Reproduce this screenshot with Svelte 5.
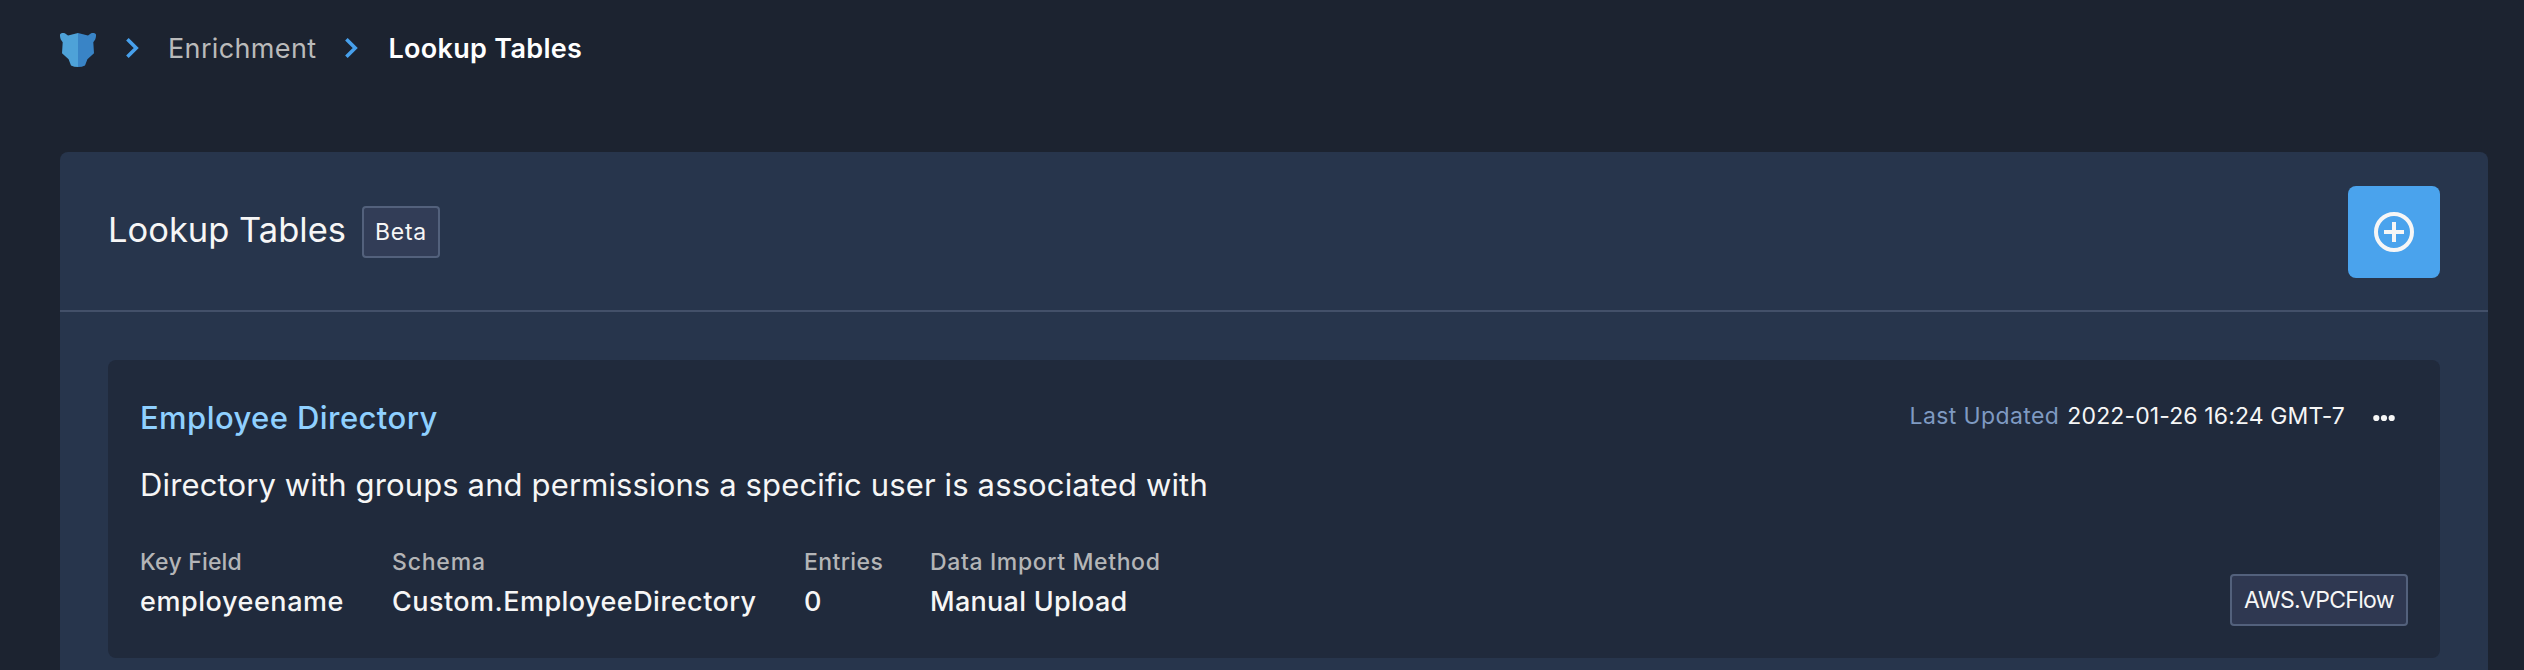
<script>
  const table = {
    name: 'Employee Directory',
    description: 'Directory with groups and permissions a specific user is associated with',
    updated: '2022-01-26 16:24 GMT-7',
    logType: 'AWS.VPCFlow'
  };
</script>

{#snippet chevron()}
  <svg class="chevron" width="14" height="20" viewBox="0 0 14 20" aria-hidden="true">
    <path d="M1.400 1.300 10.200 10 1.400 18.700" />
  </svg>
{/snippet}

<main>
  <nav>
    <svg class="logo" width="36" height="34" viewBox="0 0 36 34" aria-hidden="true">
      <path fill="#4ea2d8" d="M18 0 8 2.500 5.200 .4C3.800-.4 1-.3.1 1.200-.2 2.800.1 5 .8 6.600L2.700 9.200 2 20.300 8.600 26.300 11 32.400Q14 33.900 18 33.900Z" />
      <path fill="#3984c6" d="M18 0 28 2.500 30.800 .4C32.200-.4 35-.3 35.900 1.200 36.200 2.800 35.900 5 35.200 6.600L33.300 9.200 34 20.300 27.400 26.300 25 32.400Q22 33.900 18 33.900Z" />
    </svg>
    {@render chevron()}
    <span class="crumb">Enrichment</span>
    {@render chevron()}
    <span class="crumb current">Lookup Tables</span>
  </nav>

  <section class="panel">
    <header>
      <h1>Lookup Tables</h1>
      <span class="badge beta">Beta</span>
      <button class="add" aria-label="Add">
        <svg width="40" height="40" viewBox="0 0 40 40">
          <circle cx="20" cy="20" r="18" />
          <path d="M20 10v20M10 20h20" />
        </svg>
      </button>
    </header>

    <div class="body">
      <article>
        <div class="top">
          <h2>{table.name}</h2>
          <div class="updated"><span class="when">Last Updated</span><span class="date">{table.updated}</span></div>
          <button class="menu" aria-label="Options">
            <svg width="24" height="8" viewBox="0 0 24 8">
              <circle cx="4.300" cy="4" r="3.100" /><circle cx="12" cy="4" r="3.100" /><circle cx="19.700" cy="4" r="3.100" />
            </svg>
          </button>
        </div>
        <p>{table.description}</p>
        <div class="details">
          <dl class="key"><dt>Key Field</dt><dd>employeename</dd></dl>
          <dl class="schema"><dt>Schema</dt><dd>Custom.EmployeeDirectory</dd></dl>
          <dl class="entries"><dt>Entries</dt><dd>0</dd></dl>
          <dl class="method"><dt>Data Import Method</dt><dd>Manual Upload</dd></dl>
          <span class="badge type">{table.logType}</span>
        </div>
      </article>
    </div>
  </section>
</main>

<style>
  :global(body) { background: #1c2330; overflow: hidden; }
  main {
    box-sizing: border-box;
    height: 670px;
    overflow: hidden;
    padding: 28px 36px 0 60px;
    display: flex;
    flex-direction: column;
    background: #1c2330;
    color: #f6f6f6;
    font-family: Inter, sans-serif;
    white-space: nowrap;
  }
  nav { display: flex; align-items: center; height: 40px; margin-bottom: 84px; }
  .logo { margin: 4px 30px 0 0; }
  .chevron { fill: none; stroke: #47a0ec; stroke-width: 3.6; }
  .crumb { margin: 1px 29px 0 28px; font-size: 27px; line-height: 40px; letter-spacing: .36px; color: #bababa; }
  .current { margin-left: 29px; font-weight: 600; letter-spacing: .3px; color: #fff; }
  .panel { flex: 1 0 506px; display: flex; flex-direction: column; background: #27354c; border-radius: 8px 8px 0 0; }
  header {
    display: flex;
    align-items: center;
    padding: 34px 48px 32px;
    border-bottom: 2px solid #435069;
  }
  h1, h2, p, dl, dt, dd { margin: 0; font-weight: 400; }
  h1 { font-size: 34.5px; line-height: 44px; padding-bottom: 5px; width: 254px; }
  .badge {
    box-sizing: border-box;
    display: flex;
    align-items: center;
    justify-content: center;
    height: 52px;
    border: 2px solid #53617c;
    border-radius: 4px;
    background: #323d57;
    font-size: 23px;
  }
  .beta { width: 78px; letter-spacing: .77px; }
  .type { width: 178px; margin-left: auto; letter-spacing: -.67px; background: #2f3851; }
  button { border: 0; padding: 0; display: flex; align-items: center; justify-content: center; }
  .add { width: 92px; height: 92px; margin-left: auto; border-radius: 8px; background: #4aa3ed; }
  .add svg { fill: none; stroke: #f6f6f6; stroke-width: 4; }
  .body { padding: 48px; }
  article { padding: 32px; border-radius: 8px; background: #202a3c; }
  .top { display: flex; align-items: center; height: 50px; }
  h2 { font-size: 31px; font-weight: 500; letter-spacing: .42px; color: #8fd0ff; }
  .updated { display: flex; margin-left: auto; padding-bottom: 3px; font-size: 23px; line-height: 30px; }
  .when { letter-spacing: .4px; color: #7f9ac2; margin-right: 8px; }
  .date { letter-spacing: .12px; }
  .menu { width: 48px; height: 32px; margin-left: 15px; background: none; padding-top: 2px; }
  .menu svg { fill: #f6f6f6; }
  p { margin-top: 23px; font-size: 31px; line-height: 40px; letter-spacing: .13px; }
  .details { display: flex; align-items: flex-end; gap: 48px; height: 80px; margin-top: 41px; }
  dl { height: 80px; }
  dt { font-size: 23px; font-weight: 500; line-height: 32px; color: #b4b5b7; }
  dd { margin-top: 4px; font-size: 27px; font-weight: 500; line-height: 40px; }
  .key { width: 204px; }
  .key dt { letter-spacing: .2px; }
  .key dd { letter-spacing: .56px; }
  .schema { width: 364px; }
  .schema dt { letter-spacing: .8px; }
  .schema dd { letter-spacing: .46px; }
  .entries { width: 78px; }
  .entries dt { letter-spacing: .4px; }
  .method dt { letter-spacing: .63px; }
  .method dd { letter-spacing: .28px; }
</style>
